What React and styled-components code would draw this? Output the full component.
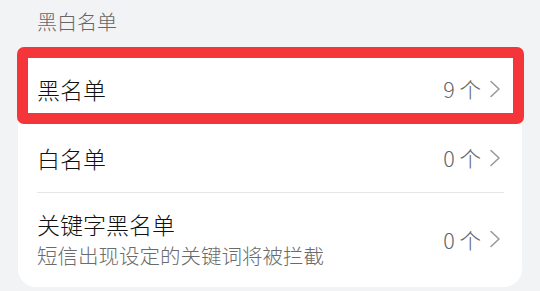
import styled, { createGlobalStyle } from 'styled-components';

const GlobalStyle = createGlobalStyle`
    html, body {
        margin: 0;
        padding: 0;
        background: #f1f3f5;
        font-family: "Noto Sans CJK SC", "Noto Sans", sans-serif;
        font-weight: 300;
    }
`;

const lists = [
    { title: '黑名单', count: 9, highlighted: true },
    { title: '白名单', count: 0 },
    { title: '关键字黑名单', desc: '短信出现设定的关键词将被拦截', count: 0 },
];

const Chevron = () => (
    <svg width="14" height="20" viewBox="0 0 14 20">
        <path d="M3 2.5 L11 10 L3 17.5" fill="none" stroke="#9a9a9a" strokeWidth="1.6" strokeLinecap="round" strokeLinejoin="round" />
    </svg>
);

export default function App() {
    return (
        <Page>
            <GlobalStyle />
            <SectionTitle>黑白名单</SectionTitle>
            <Card>
                {lists.map((item, i) => (
                    <Row key={item.title} $highlighted={item.highlighted}>
                        <RowInner $divider={i > 0 && !lists[i - 1].highlighted} $tall={!!item.desc}>
                            <Texts>
                                <Title>{item.title}</Title>
                                {item.desc && <Desc>{item.desc}</Desc>}
                            </Texts>
                            <Count>
                                {item.count} 个
                                <Chevron />
                            </Count>
                        </RowInner>
                    </Row>
                ))}
            </Card>
        </Page>
    );
}

const Page = styled.div`
    width: 540px;
    height: 291px;
    overflow: hidden;
`;

const SectionTitle = styled.div`
    padding: 8px 0 0 37px;
    font-size: 20px;
    line-height: 28px;
    color: #666;
`;

const Card = styled.div`
    margin: 18px 18px 0;
    background: #fff;
    border-radius: 18px;
`;

const Row = styled.div`
    position: relative;
    padding: 0 18px 0 19px;
    &::after{
        content: '';
        display: ${p => p.$highlighted ? 'block' : 'none'};
        position: absolute;
        top: -7px;
        bottom: -1px;
        left: -1px;
        right: -2px;
        border: 11px solid #f4363a;
        border-radius: 7px;
        pointer-events: none;
    }
`;

const RowInner = styled.div`
    display: flex;
    align-items: center;
    justify-content: space-between;
    min-height: 69px;
    padding: ${p => p.$tall ? '15px 0 17px' : '0'};
    border-top: ${p => p.$divider ? '1px solid #e6e6e6' : 'none'};
    box-sizing: border-box;
`;

const Texts = styled.div`
    display: flex;
    flex-direction: column;
`;

const Title = styled.div`
    font-size: 23px;
    line-height: 32px;
    color: #111;
`;

const Desc = styled.div`
    font-size: 20.5px;
    line-height: 30px;
    color: #6b6b6b;
`;

const Count = styled.div`
    display: flex;
    align-items: center;
    gap: 7px;
    font-size: 21.5px;
    color: #666;
    svg{
        margin-right: 2px;
    }
`;
